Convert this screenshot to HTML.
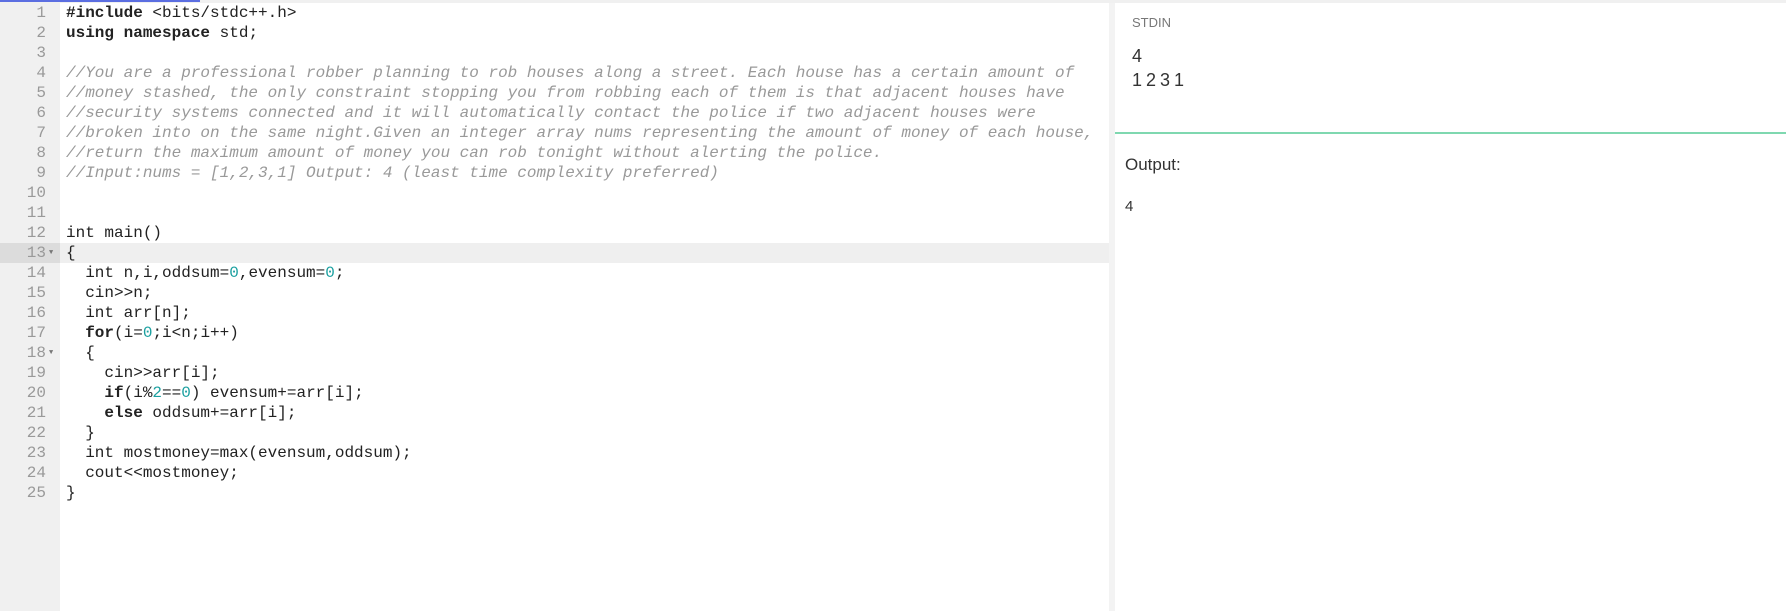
<!DOCTYPE html>
<html><head><meta charset="utf-8"><style>
*{margin:0;padding:0;box-sizing:border-box}
body{width:1786px;height:611px;overflow:hidden;background:#fff;position:relative;font-family:"Liberation Sans",sans-serif}
#top{position:absolute;left:0;top:0;width:1786px;height:3px;background:#f0f0f0}
#blue{position:absolute;left:0;top:0;width:200px;height:2px;background:#5b6ee1}
#gut{position:absolute;left:0;top:3px;width:60px;height:608px;background:#f0f0f0}
#ed{position:absolute;left:0;top:3px;width:1109px;height:608px}
.l{position:absolute;left:0;height:20px;line-height:20px;width:1109px;font-family:"Liberation Mono",monospace;font-size:16px;white-space:pre;color:#222}
.n{position:absolute;left:0;width:46px;text-align:right;color:#999}
.c{position:absolute;left:66px}
.cm{color:#999;font-style:italic}
.k{font-weight:bold}
.d{color:#1ba0a0}
.act{background:#efefef}
.act .n{background:#dcdcdc;width:60px;padding-right:14px}
.ar{position:absolute;left:49px;top:0;line-height:20px;font-size:7px;color:#777}
#gap{position:absolute;left:1109px;top:3px;width:6px;height:608px;background:#f3f3f3}
#stdin{position:absolute;left:1132px;top:15px;font-size:13px;color:#777}
.in{position:absolute;left:1132px;font-size:18px;color:#333}
#green{position:absolute;left:1115px;top:132px;width:671px;height:2px;background:#7fd8b0}
#out{position:absolute;left:1125px;top:155px;font-size:17px;color:#333}
#o4{position:absolute;left:1125px;top:198px;font-size:15px;color:#333}
</style></head><body>
<div id="top"></div><div id="blue"></div>
<div id="gut"></div>
<div id="ed">
<div class="l" style="top:0"><span class="n">1</span><span class="c"><span class="k">#include</span> &lt;bits/stdc++.h&gt;</span></div>
<div class="l" style="top:20px"><span class="n">2</span><span class="c"><span class="k">using namespace</span> std;</span></div>
<div class="l" style="top:40px"><span class="n">3</span></div>
<div class="l" style="top:60px"><span class="n">4</span><span class="c cm">//You are a professional robber planning to rob houses along a street. Each house has a certain amount of</span></div>
<div class="l" style="top:80px"><span class="n">5</span><span class="c cm">//money stashed, the only constraint stopping you from robbing each of them is that adjacent houses have</span></div>
<div class="l" style="top:100px"><span class="n">6</span><span class="c cm">//security systems connected and it will automatically contact the police if two adjacent houses were</span></div>
<div class="l" style="top:120px"><span class="n">7</span><span class="c cm">//broken into on the same night.Given an integer array nums representing the amount of money of each house,</span></div>
<div class="l" style="top:140px"><span class="n">8</span><span class="c cm">//return the maximum amount of money you can rob tonight without alerting the police.</span></div>
<div class="l" style="top:160px"><span class="n">9</span><span class="c cm">//Input:nums = [1,2,3,1] Output: 4 (least time complexity preferred)</span></div>
<div class="l" style="top:180px"><span class="n">10</span></div>
<div class="l" style="top:200px"><span class="n">11</span></div>
<div class="l" style="top:220px"><span class="n">12</span><span class="c">int main()</span></div>
<div class="l act" style="top:240px"><span class="n">13</span><span class="ar">▼</span><span class="c">{</span></div>
<div class="l" style="top:260px"><span class="n">14</span><span class="c">  int n,i,oddsum=<span class="d">0</span>,evensum=<span class="d">0</span>;</span></div>
<div class="l" style="top:280px"><span class="n">15</span><span class="c">  cin&gt;&gt;n;</span></div>
<div class="l" style="top:300px"><span class="n">16</span><span class="c">  int arr[n];</span></div>
<div class="l" style="top:320px"><span class="n">17</span><span class="c">  <span class="k">for</span>(i=<span class="d">0</span>;i&lt;n;i++)</span></div>
<div class="l" style="top:340px"><span class="n">18</span><span class="ar">▼</span><span class="c">  {</span></div>
<div class="l" style="top:360px"><span class="n">19</span><span class="c">    cin&gt;&gt;arr[i];</span></div>
<div class="l" style="top:380px"><span class="n">20</span><span class="c">    <span class="k">if</span>(i%<span class="d">2</span>==<span class="d">0</span>) evensum+=arr[i];</span></div>
<div class="l" style="top:400px"><span class="n">21</span><span class="c">    <span class="k">else</span> oddsum+=arr[i];</span></div>
<div class="l" style="top:420px"><span class="n">22</span><span class="c">  }</span></div>
<div class="l" style="top:440px"><span class="n">23</span><span class="c">  int mostmoney=max(evensum,oddsum);</span></div>
<div class="l" style="top:460px"><span class="n">24</span><span class="c">  cout&lt;&lt;mostmoney;</span></div>
<div class="l" style="top:480px"><span class="n">25</span><span class="c">}</span></div>
</div>
<div id="gap"></div>
<div id="stdin">STDIN</div>
<div class="in" style="top:46px">4</div>
<div class="in" style="top:70px;letter-spacing:4px">1231</div>
<div id="green"></div>
<div id="out">Output:</div>
<div id="o4">4</div>
</body></html>
